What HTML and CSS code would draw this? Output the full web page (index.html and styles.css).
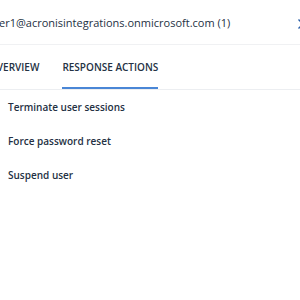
FILE: index.html
```html
<!DOCTYPE html>
<html>
<head>
    <title>User details</title>
    <link rel="stylesheet" href="styles.css">
</head>
<body>
    <div class="panel">
        <div class="header">
            <div class="title">user1@acronisintegrations.onmicrosoft.com (1)</div>
            <button class="close" title="Close">
                <svg width="10" height="10" viewBox="0 0 10 10">
                    <path d="M0.5 0.5 L9.5 9.5 M9.5 0.5 L0.5 9.5" stroke="#2b5fa8" stroke-width="1.4" fill="none"/>
                </svg>
            </button>
        </div>

        <div class="tabs">
            <div class="tab">Overview</div>
            <div class="tab active">Response actions</div>
        </div>

        <div class="actions">
            <div class="action">Terminate user sessions</div>
            <div class="action">Force password reset</div>
            <div class="action">Suspend user</div>
        </div>
    </div>
</body>
</html>
```

FILE: styles.css
```css
body {
    margin: 0;
    font-family: "Open Sans", Arial, sans-serif;
    background-color: #ffffff;
    color: #243143;
    overflow: hidden;
}

.panel {
    width: 300px;
    overflow: hidden;
}

.header {
    display: flex;
    align-items: center;
    height: 44px;
    border-bottom: 1px solid #f0f1f3;
}

.title {
    margin-left: -13px;
    font-size: 11px;
    color: #243143;
    white-space: nowrap;
    flex: 1;
}

.close {
    flex: none;
    margin-right: -8px;
    padding: 0;
    border: none;
    background: none;
    width: 10px;
    height: 10px;
    cursor: pointer;
}

.tabs {
    display: flex;
    gap: 23px;
    height: 44px;
    border-bottom: 1px solid #eceef1;
    margin-left: -11px;
}

.tab {
    display: flex;
    align-items: center;
    font-size: 10px;
    font-weight: 600;
    text-transform: uppercase;
    color: #243143;
    border-bottom: 2px solid transparent;
    padding-top: 2px;
}

.tab.active {
    border-bottom-color: #4a86d6;
}

.actions {
    padding: 0 8px;
}

.action {
    height: 34px;
    display: flex;
    align-items: center;
    font-size: 10px;
    font-weight: 600;
    color: #243143;
}
```
